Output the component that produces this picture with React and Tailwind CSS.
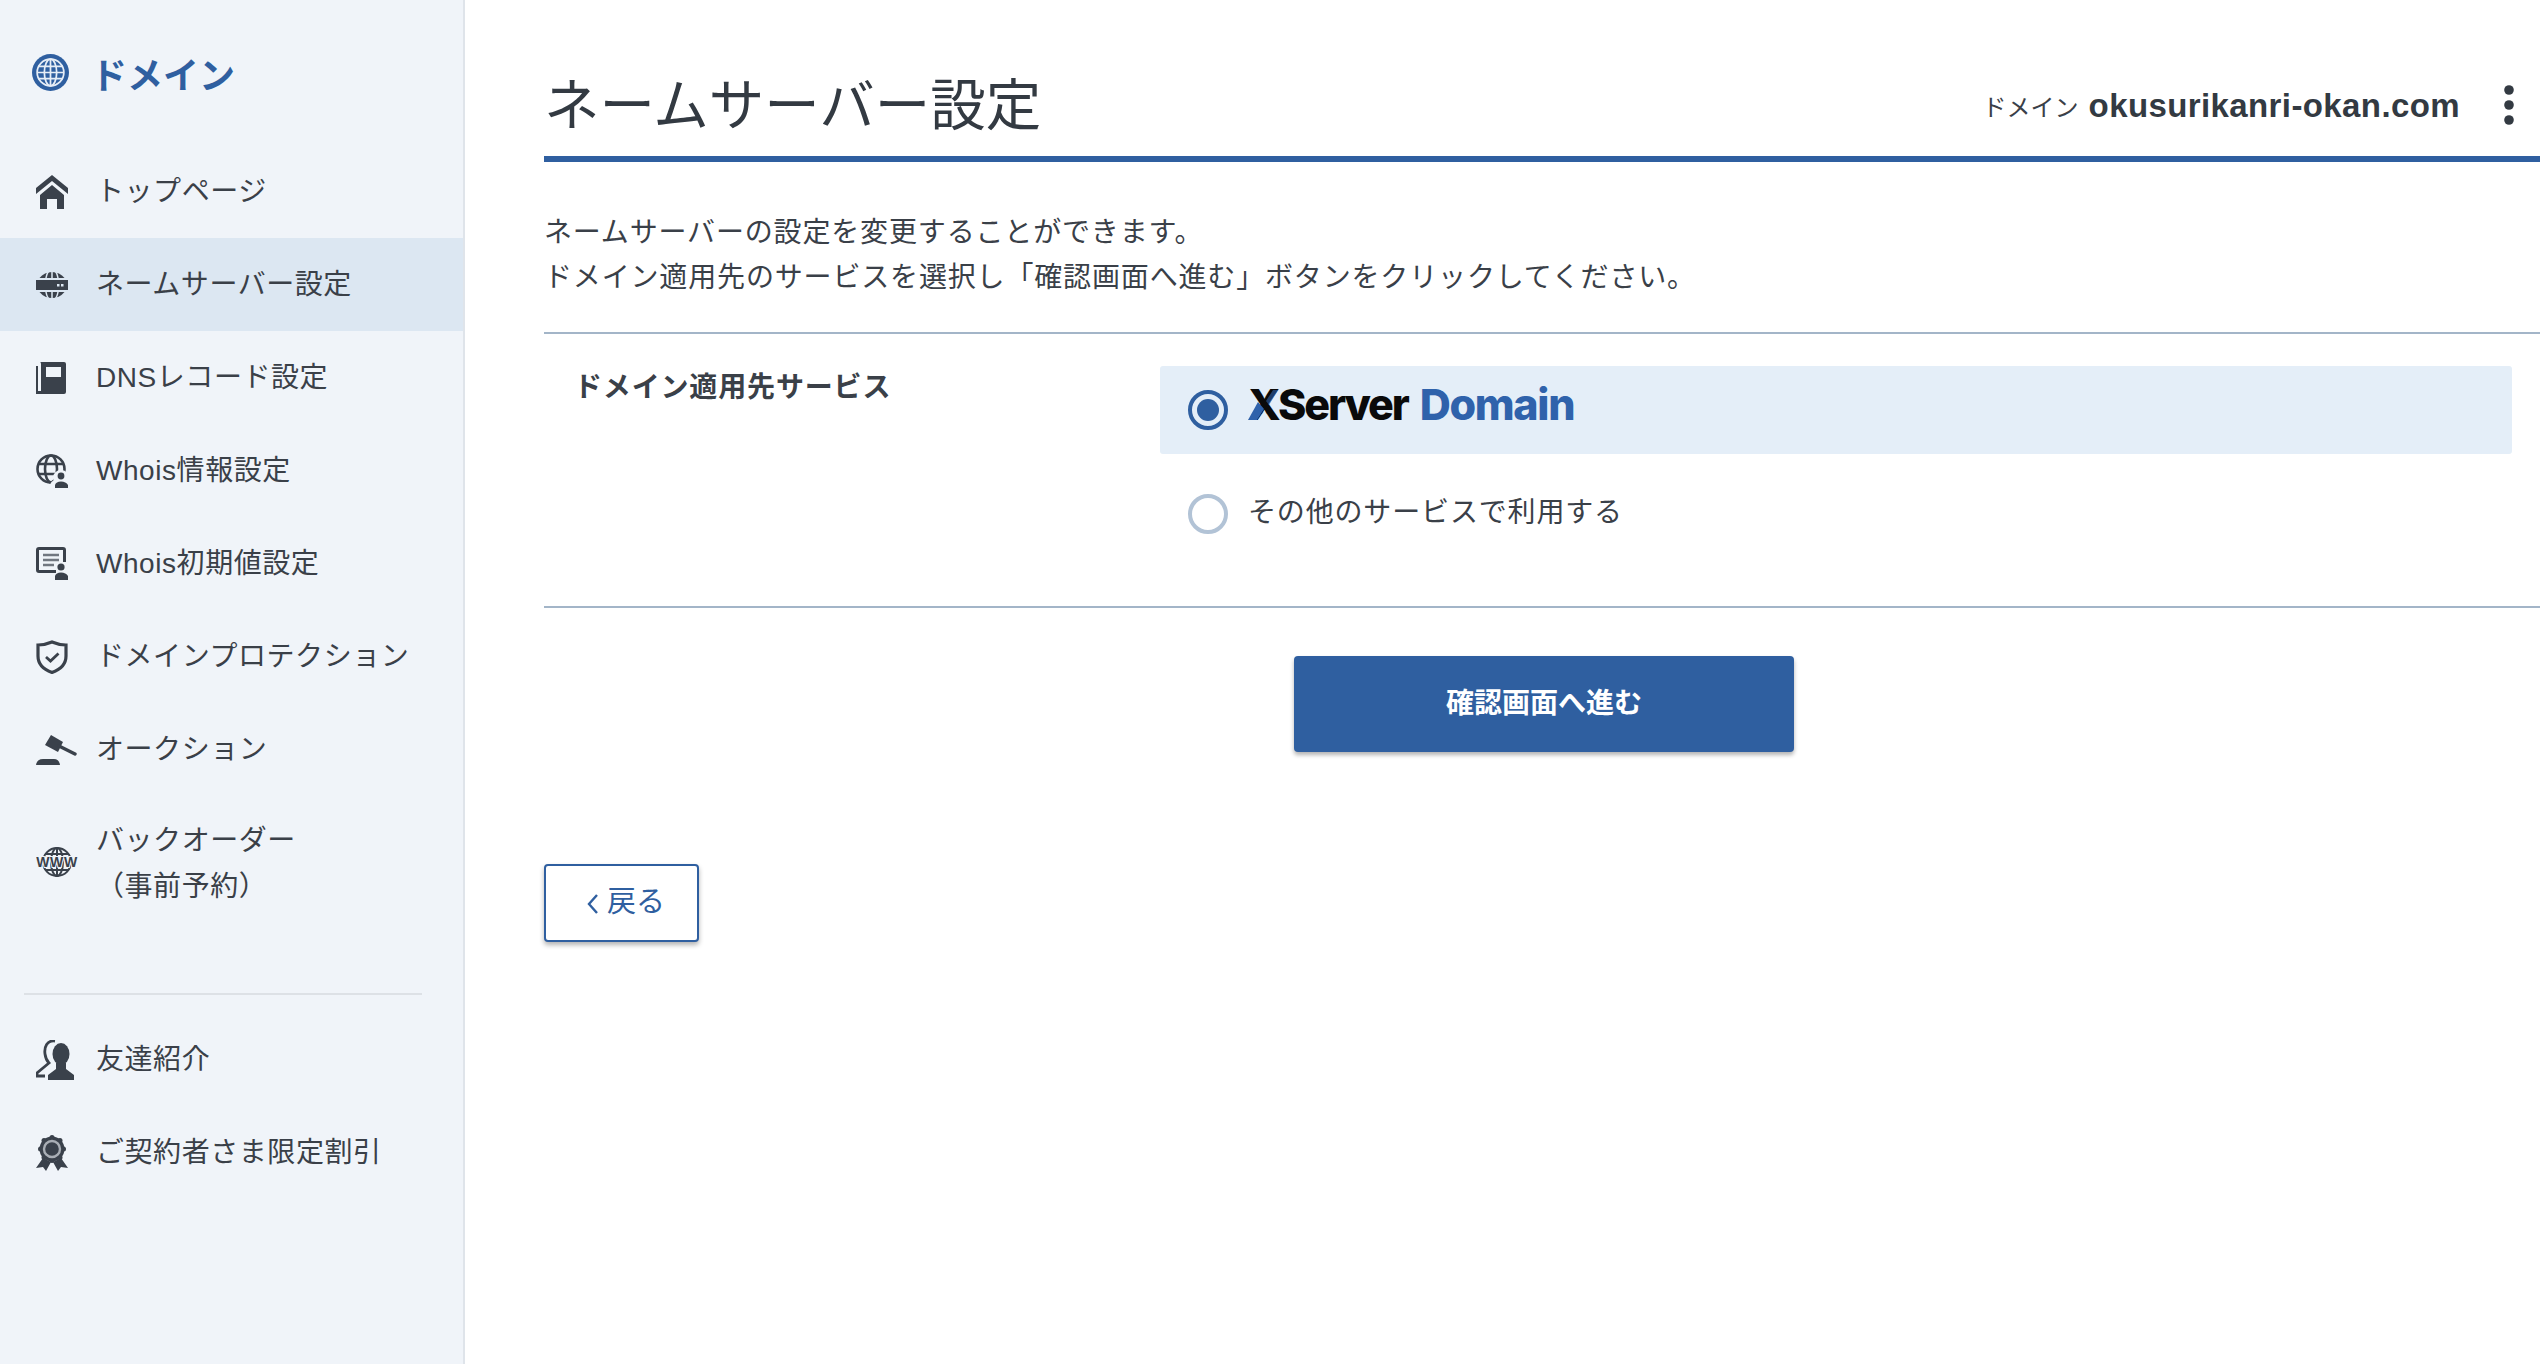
const ink = '#3a414b';

function HomeIcon() {
  return (
    <svg width="32" height="34" viewBox="0 0 32 34" fill={ink}>
      <path d="M16 0 L32 13 V19 L16 6 L0 19 V13 Z" />
      <path d="M4 20 L16 10 L28 20 V34 H21 V24 H11 V34 H4 Z" />
    </svg>
  );
}

function NameServerIcon() {
  return (
    <svg width="32" height="32" viewBox="0 0 32 32" fill={ink}>
      <path d="M3.5 9 A16 16 0 0 1 28.5 9 Z" />
      <rect x="0" y="11" width="32" height="10" />
      <path d="M3.5 23 H28.5 A16 16 0 0 1 3.5 23 Z" />
      <g fill="none" stroke="#dce7f2" strokeWidth="1.5">
        <path d="M16 0 V9 M16 23 V32 M10 9 Q11 3 15 0 M22 9 Q21 3 17 0 M10 23 Q11 29 15 32 M22 23 Q21 29 17 32" />
      </g>
      <rect x="21" y="15" width="2.5" height="2.5" fill="#dce7f2" />
      <rect x="25" y="15" width="2.5" height="2.5" fill="#dce7f2" />
    </svg>
  );
}

function BookIcon() {
  return (
    <svg width="30" height="32" viewBox="0 0 30 32" fill={ink}>
      <path d="M4 0 H28 Q30 0 30 2 V30 Q30 32 28 32 H0 V4 H2 V29 H5 V2 Q5 0 4 0 Z" />
      <rect x="10" y="5" width="15" height="10" fill="#f0f4f9" />
    </svg>
  );
}

function WhoisIcon() {
  return (
    <svg width="32" height="34" viewBox="0 0 32 34" fill="none">
      <g stroke={ink} strokeWidth="2.6">
        <circle cx="15" cy="15" r="13.5" />
        <ellipse cx="15" cy="15" rx="6" ry="13.5" />
        <path d="M2 10 H28 M2 20 H28" />
      </g>
      <circle cx="25" cy="24" r="8" fill="#f0f4f9" />
      <path d="M16 34 H32 V30 Q31 27 24 27 Q17 27 16 30 Z" fill="#f0f4f9" stroke="#f0f4f9" strokeWidth="3" />
      <circle cx="25" cy="22" r="3.4" fill={ink} />
      <path d="M19 34 V31 Q20 27.5 25 27.5 Q30 27.5 32 31 V34 Z" fill={ink} />
    </svg>
  );
}

function WhoisDefaultIcon() {
  return (
    <svg width="32" height="33" viewBox="0 0 32 33" fill="none">
      <path d="M20 24.5 H3 Q1.5 24.5 1.5 23 V3 Q1.5 1.5 3 1.5 H27 Q28.5 1.500 28.5 3 V15" stroke={ink} strokeWidth="3" />
      <path d="M7 8 H23 M7 13 H23 M7 18 H18" stroke="#717780" strokeWidth="2.6" />
      <circle cx="25" cy="20" r="3.6" fill={ink} />
      <path d="M19 33 V29 Q20 25.5 25 25.5 Q30 25.5 32 29 V33 Z" fill={ink} />
    </svg>
  );
}

function ShieldIcon() {
  return (
    <svg width="32" height="34" viewBox="0 0 32 34" fill="none" stroke={ink}>
      <path d="M16 2 Q23 5 30 5 V16 C30 25 23 30 16 32.5 C9 30 2 25 2 16 V5 Q9 5 16 2 Z" strokeWidth="3.2" />
      <path d="M10 17 L14.5 21 L22.5 13.5" strokeWidth="2.8" />
    </svg>
  );
}

function GavelIcon() {
  return (
    <svg width="41" height="30" viewBox="0 0 41 30" fill={ink}>
      <path d="M0 30 Q1 24 7 24 H18 Q23 24 24 30 Z" />
      <path d="M15 0 L27 7 L22 17 L9 10 Z" />
      <path d="M23 11 L39 19" stroke={ink} strokeWidth="3.4" strokeLinecap="round" />
    </svg>
  );
}

function WwwIcon() {
  return (
    <svg width="42" height="30" viewBox="0 0 42 30" fill="none">
      <g stroke={ink} strokeWidth="2">
        <circle cx="21" cy="15" r="14" />
        <ellipse cx="21" cy="15" rx="6" ry="14" />
        <path d="M21 1 V29 M9 7 H33 M9 23 H33" />
      </g>
      <text x="21" y="20" textAnchor="middle" fontFamily="Liberation Sans" fontWeight="700" fontSize="14" fill={ink} stroke="#f0f4f9" strokeWidth="2" paintOrder="stroke">WWW</text>
    </svg>
  );
}

function FriendIcon() {
  return (
    <svg width="38" height="40" viewBox="0 0 38 40" fill={ink}>
      <path d="M19 1 C11 0 8 7 9 14 C9.500 18 11 21 13 23 L1 33 V36 H9" fill="none" stroke={ink} strokeWidth="2.8" />
      <ellipse cx="25" cy="14" rx="8.500" ry="11" />
      <path d="M20 23 H30 V29 L38 35 V40 H12 V35 L20 29 Z" />
    </svg>
  );
}

function AwardIcon() {
  return (
    <svg width="32" height="36" viewBox="0 0 32 36" fill={ink}>
      <path d="M7 23 L0 33 L7 32 L10 36 L15 27 Z" />
      <path d="M25 23 L32 33 L25 32 L22 36 L17 27 Z" />
      <circle cx="16" cy="14" r="12.500" />
      <g>
        <circle cx="16" cy="2.500" r="2.500" />
        <circle cx="24" cy="5.500" r="2.500" />
        <circle cx="27.500" cy="14" r="2.500" />
        <circle cx="24" cy="22.500" r="2.500" />
        <circle cx="16" cy="25.500" r="2.500" />
        <circle cx="8" cy="22.500" r="2.500" />
        <circle cx="4.500" cy="14" r="2.500" />
        <circle cx="8" cy="5.500" r="2.500" />
      </g>
      <circle cx="16" cy="14" r="8" fill="none" stroke="#a9aeb5" strokeWidth="2.4" />
    </svg>
  );
}

function NavItem({ icon, active, tall, children }) {
  return (
    <a className={`flex items-center pl-[36px] text-[28px] tracking-[0.02em] text-[#3a4048] ${active ? 'bg-[#dce7f2]' : ''} ${tall ? 'h-[132px] leading-[46px]' : 'h-[93px] leading-[45px]'}`}>
      <span className="w-[60px] shrink-0 flex items-center">{icon}</span>
      <span className={tall ? 'pt-[4px]' : ''}>{children}</span>
    </a>
  );
}

export default function App() {
  return (
    <div className="flex min-h-[1364px] bg-white font-['Liberation_Sans','Noto_Sans_CJK_JP',sans-serif] text-[#3a4048]">
      {/* sidebar */}
      <aside className="w-[465px] shrink-0 bg-[#f0f4f9] border-r-2 border-[#dfe4ea]">
        <div className="h-[145px] flex items-center pl-[32px] pt-[8px]">
          <svg width="37" height="37" viewBox="0 0 36 36" fill="#2f5fa0" className="mb-[8px]">
            <circle cx="18" cy="18" r="18" />
            <g fill="none" stroke="#e6edf6" strokeWidth="1.700">
              <circle cx="18" cy="18" r="13" />
              <ellipse cx="18" cy="18" rx="6" ry="13" />
              <path d="M18 5 V31 M6 12 H30 M5 18 H31 M6 24 H30" />
            </g>
          </svg>
          <h2 className="ml-[22px] text-[36px] font-bold text-[#2f5fa0]">ドメイン</h2>
        </div>
        <nav>
          <NavItem icon={<HomeIcon />}>トップページ</NavItem>
          <NavItem icon={<NameServerIcon />} active>ネームサーバー設定</NavItem>
          <NavItem icon={<BookIcon />}>DNSレコード設定</NavItem>
          <NavItem icon={<WhoisIcon />}>Whois情報設定</NavItem>
          <NavItem icon={<WhoisDefaultIcon />}>Whois初期値設定</NavItem>
          <NavItem icon={<ShieldIcon />}>ドメインプロテクション</NavItem>
          <NavItem icon={<GavelIcon />}>オークション</NavItem>
          <NavItem icon={<WwwIcon />} tall>バックオーダー<br />（事前予約）</NavItem>
        </nav>
        <div className="mt-[65px] mb-[18px] ml-[24px] w-[398px] border-t-2 border-[#dde1e6]" />
        <nav>
          <NavItem icon={<FriendIcon />}>友達紹介</NavItem>
          <NavItem icon={<AwardIcon />}>ご契約者さま限定割引</NavItem>
        </nav>
      </aside>

      {/* main */}
      <main className="flex-1 pl-[79px]">
        <header className="h-[162px] border-b-[6px] border-[#2f5fa0] flex items-center justify-between pt-[54px] pr-[26px]">
          <h1 className="text-[55.500px] font-normal mt-[4px] text-[#333a42]">ネームサーバー設定</h1>
          <div className="flex items-center">
            <span className="text-[24px] mt-[5px]">ドメイン</span>
            <span className="ml-[10px] text-[33px] font-bold tracking-[0.012em] text-[#333a42] mt-[2px]">okusurikanri-okan.com</span>
            <svg width="10" height="40" viewBox="0 0 10 40" fill="#333a42" className="ml-[44px]">
              <circle cx="5" cy="5" r="4.800" />
              <circle cx="5" cy="20" r="4.800" />
              <circle cx="5" cy="35" r="4.800" />
            </svg>
          </div>
        </header>

        <p className="mt-[48px] text-[28px] leading-[45px] tracking-[0.03em]">
          ネームサーバーの設定を変更することができます。<br />
          ドメイン適用先のサービスを選択し「確認画面へ進む」ボタンをクリックしてください。
        </p>

        <section className="mt-[32px] h-[276px] border-t-2 border-b-2 border-[#a3b5c8] flex pt-[32px] pr-[28px]">
          <div className="w-[616px] shrink-0 pl-[30px] -mt-[1px] text-[28px] leading-[45px] font-bold tracking-[0.03em]">ドメイン適用先サービス</div>
          <div className="flex-1">
            <label className="h-[88px] rounded-[3px] bg-[#e4eef8] flex items-center pl-[28px]">
              <span className="w-10 h-10 rounded-full border-[4px] border-[#2f5fa0] flex items-center justify-center">
                <span className="w-[22px] h-[22px] rounded-full bg-[#2f5fa0]" />
              </span>
              <span className="relative ml-[20px] mb-[12px] text-[43px] font-extrabold tracking-[-0.03em] font-['Inter',sans-serif] leading-none">
                <span className="text-[#0a0a0a] tracking-[-0.05em]">XServer</span>
                <span className="ml-[12px] text-[#2f62ab]">Domain</span>
                {/* blue stroke of the logo's X, only the lower left part stays solid */}
                <svg width="34" height="32" viewBox="0 0 34 32" className="absolute left-0 top-[5px]">
                  <path d="M0 32 L9 32 L16 21 L10 14 Z" fill="#2f62ab" />
                  <path d="M18 13 L25 2 L30 2 L21 17 Z" fill="#2f62ab" opacity="0.6" />
                </svg>
              </span>
            </label>
            <label className="mt-[40px] h-[40px] flex items-center pl-[28px]">
              <span className="w-10 h-10 rounded-full border-[4px] border-[#b2c3d6] bg-white" />
              <span className="ml-[20px] mb-[2px] text-[28px] tracking-[0.03em]">その他のサービスで利用する</span>
            </label>
          </div>
        </section>

        <div className="mt-[48px] flex justify-center pl-[4px]">
          <button className="w-[500px] h-[96px] rounded-[4px] bg-[#2f5fa0] text-white text-[28px] font-bold shadow-[0_3px_4px_rgba(0,0,0,0.3)]">確認画面へ進む</button>
        </div>

        <button className="mt-[112px] w-[155px] h-[78px] rounded-[4px] border-2 border-[#2f5fa0] bg-white text-[#2f5fa0] text-[29px] flex items-center justify-center pl-[9px] shadow-[0_3px_5px_rgba(0,0,0,0.3)]">
          <svg width="12" height="20" viewBox="0 0 12 20" fill="none" stroke="#2f5fa0" strokeWidth="2.4" className="mr-[8px] mt-[2px]">
            <polyline points="10,1 2,10 10,19" />
          </svg>
          戻る
        </button>
      </main>
    </div>
  );
}
